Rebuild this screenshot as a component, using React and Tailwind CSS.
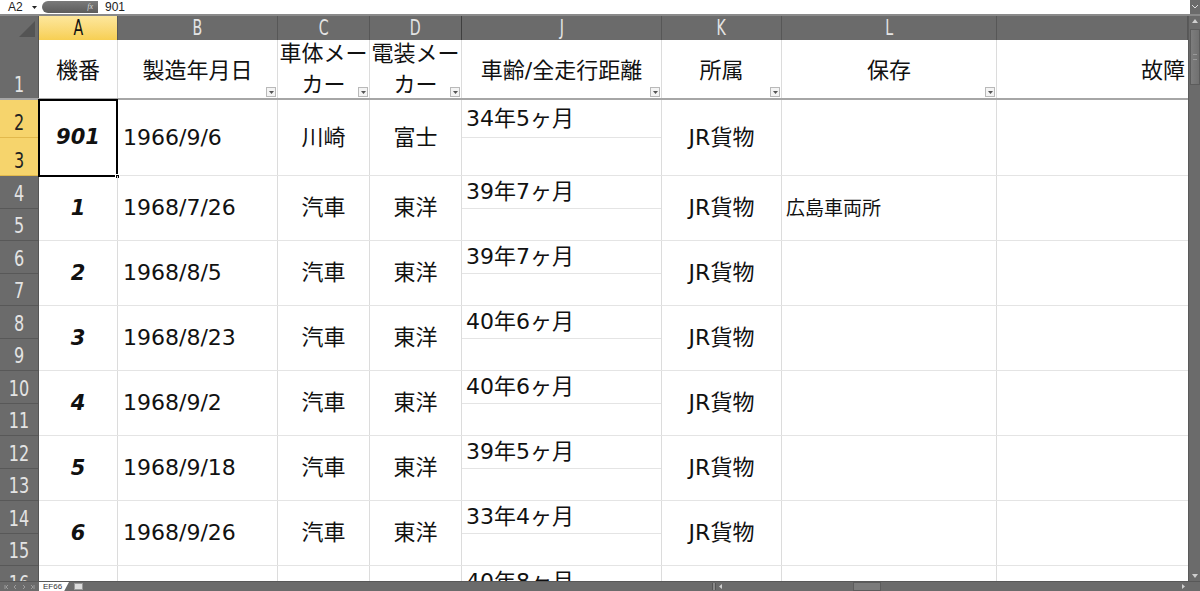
import React from 'react';

const CJK = "font-['DejaVu_Sans','Noto_Sans_CJK_JP',sans-serif]";
const UI = "font-['DejaVu_Sans_Condensed','DejaVu_Sans',sans-serif] [font-stretch:condensed]";

const records = [
  { no: '901', date: '1966/9/6', body: '川崎', elec: '富士', age: '34年5ヶ月', owner: 'JR貨物', keep: '', rows: [2, 3], tall: true },
  { no: '1', date: '1968/7/26', body: '汽車', elec: '東洋', age: '39年7ヶ月', owner: 'JR貨物', keep: '広島車両所', rows: [4, 5] },
  { no: '2', date: '1968/8/5', body: '汽車', elec: '東洋', age: '39年7ヶ月', owner: 'JR貨物', keep: '', rows: [6, 7] },
  { no: '3', date: '1968/8/23', body: '汽車', elec: '東洋', age: '40年6ヶ月', owner: 'JR貨物', keep: '', rows: [8, 9] },
  { no: '4', date: '1968/9/2', body: '汽車', elec: '東洋', age: '40年6ヶ月', owner: 'JR貨物', keep: '', rows: [10, 11] },
  { no: '5', date: '1968/9/18', body: '汽車', elec: '東洋', age: '39年5ヶ月', owner: 'JR貨物', keep: '', rows: [12, 13] },
  { no: '6', date: '1968/9/26', body: '汽車', elec: '東洋', age: '33年4ヶ月', owner: 'JR貨物', keep: '', rows: [14, 15] },
  { no: '', date: '', body: '', elec: '', age: '40年8ヶ月', owner: '', keep: '', rows: [16, 17] },
];

function FilterButton() {
  return (
    <div className="absolute right-[1px] bottom-[1px] w-[10px] h-[10px] bg-[#f4f4f4] border border-[#b9b9b9] flex items-center justify-center">
      <svg width="5" height="3" viewBox="0 0 5 3"><path d="M0 0h5L2.5 3z" fill="#555" /></svg>
    </div>
  );
}

function FormulaBar() {
  return (
    <div className="h-[16px] shrink-0 flex items-stretch bg-white border-b-2 border-[#8a8a8a] text-[12px] leading-none text-[#222]">
      <div className="w-[42px] flex items-center pl-[8px] font-['Liberation_Sans',sans-serif]">
        <span>A2</span>
        <svg className="ml-auto mr-[5px]" width="5" height="3" viewBox="0 0 5 3"><path d="M0 0h5L2.5 3z" fill="#222" /></svg>
      </div>
      <div className="w-[56px] my-[1px] rounded-l-full bg-linear-to-b from-[#7a7a7a] to-[#5c5c5c] flex items-center justify-end pr-[5px]">
        <span className="italic text-[8px] text-[#d8d8d8] font-['Liberation_Serif',serif]">fx</span>
      </div>
      <div className="flex-1 flex items-center pl-[7px] font-['Liberation_Sans',sans-serif]">901</div>
      <div className="w-[10px] bg-[#6b6b6b] flex items-center justify-center">
        <svg width="6" height="4" viewBox="0 0 6 4"><path d="M0 0l3 3 3-3" stroke="#ddd" fill="none" /></svg>
      </div>
    </div>
  );
}

function ColumnHeaders() {
  const letters = [
    { l: 'A', w: 'w-[79px]', sel: true },
    { l: 'B', w: 'w-[160px]' },
    { l: 'C', w: 'w-[92px]' },
    { l: 'D', w: 'w-[92px]', dark: true },
    { l: 'J', w: 'w-[200px]' },
    { l: 'K', w: 'w-[120px]' },
    { l: 'L', w: 'w-[215px]' },
    { l: '', w: 'flex-1' },
  ];
  return (
    <div className={`h-[24px] shrink-0 flex bg-[#6b6b6b] ${UI} text-[21px] leading-none`}>
      <div className="w-[39px] shrink-0 border-r border-[#555] relative">
        <svg className="absolute right-[3px] bottom-[3px]" width="16" height="16" viewBox="0 0 16 16"><path d="M16 0v16H0z" fill="#545454" /></svg>
      </div>
      {letters.map((c) => (
        <div
          key={c.l || 'm'}
          className={`${c.w} shrink-0 flex items-center justify-center border-r ${c.dark ? 'border-[#3f3f3f]' : 'border-[#575757]'} ${c.sel ? 'bg-linear-to-b from-[#fde79c] to-[#f7cf52] text-[#111]' : 'text-[#e4e4e4]'}`}
        >
          <span className="inline-block scale-x-75">{c.l}</span>
        </div>
      ))}
    </div>
  );
}

function HeaderRow() {
  const cell = 'relative shrink-0 flex items-center border-r border-[#dcdcdc]';
  return (
    <div className={`h-[60px] shrink-0 flex border-b-2 border-[#a6a6a6] ${CJK} text-[22px] leading-[31px] text-[#111]`}>
      <div className={`w-[39px] shrink-0 bg-[#6b6b6b] border-r border-[#555] flex items-end justify-center pb-[2px] ${UI} text-[21px] leading-none text-[#e4e4e4]`}>
        <span className="inline-block scale-x-85">1</span>
      </div>
      <div className={`${cell} w-[79px] justify-center pt-[3px]`}>機番</div>
      <div className={`${cell} w-[160px] justify-center pt-[3px]`}>製造年月日<FilterButton /></div>
      <div className={`${cell} w-[92px] justify-center text-center`}>車体メー<br />カー<FilterButton /></div>
      <div className={`${cell} w-[92px] justify-center text-center border-[#4a4a4a]`}>電装メー<br />カー<FilterButton /></div>
      <div className={`${cell} w-[200px] justify-center pt-[3px]`}>車齢/全走行距離<FilterButton /></div>
      <div className={`${cell} w-[120px] justify-center pt-[3px]`}>所属<FilterButton /></div>
      <div className={`${cell} w-[215px] justify-center pt-[3px]`}>保存<FilterButton /></div>
      <div className={`${cell} flex-1 justify-end pr-[3px] pt-[3px] border-r-0`}>故障</div>
    </div>
  );
}

function Record({ r }) {
  const cell = 'shrink-0 flex items-center border-r border-[#dcdcdc]';
  const sel = r.tall;
  return (
    <div className={`${r.tall ? 'h-[76px]' : 'h-[65px]'} shrink-0 flex border-b border-[#e4e4e4] ${CJK} text-[22px] leading-none text-[#111]`}>
      <div className={`w-[39px] shrink-0 flex flex-col border-r border-[#555] ${UI} text-[21px] leading-none -mb-px`}>
        {r.rows.map((n) => (
          <div
            key={n}
            className={`flex-1 flex items-end justify-center pb-[3px] border-b ${sel ? 'bg-[#f6d46c] text-[#222] border-[#e2b94c]' : 'bg-[#6b6b6b] text-[#e4e4e4] border-[#585858]'}`}
          >
            <span className="inline-block scale-x-85">{n}</span>
          </div>
        ))}
      </div>
      <div className={`${cell} w-[79px] justify-center relative font-['DejaVu_Sans',sans-serif] font-bold italic text-[21px]`}>
        {r.no}
        {sel && (
          <div className="absolute -left-px -top-px right-[-1px] bottom-[-2px] border-2 border-black">
            <div className="absolute right-[-4px] bottom-[-4px] w-[5px] h-[5px] bg-black border border-white" />
          </div>
        )}
      </div>
      <div className={`${cell} w-[160px] pl-[5px]`}>{r.date}</div>
      <div className={`${cell} w-[92px] justify-center`}>{r.body}</div>
      <div className={`${cell} w-[92px] justify-center border-[#4a4a4a]`}>{r.elec}</div>
      <div className="w-[200px] shrink-0 flex flex-col border-r border-[#dcdcdc]">
        <div className="flex-1 flex items-center pl-[4px] border-b border-[#e4e4e4]">{r.age}</div>
        <div className="flex-1" />
      </div>
      <div className={`${cell} w-[120px] justify-center`}>{r.owner}</div>
      <div className={`${cell} w-[215px] pl-[4px] text-[19px]`}>{r.keep}</div>
      <div className={`${cell} flex-1 border-r-0`} />
    </div>
  );
}

function VScroll() {
  return (
    <div className="w-[12px] shrink-0 bg-[#6b6b6b] flex flex-col items-center py-[3px] border-l border-[#5a5a5a]">
      <svg width="6" height="4" viewBox="0 0 6 4"><path d="M0 4h6L3 0z" fill="#cfcfcf" /></svg>
      <div className="mt-[6px] w-[10px] h-[56px] bg-linear-to-r from-[#7d7d7d] to-[#707070] border border-[#5c5c5c] flex items-center justify-center">
        <div className="w-[4px] h-[6px] border-y border-[#999]" />
      </div>
      <div className="flex-1" />
      <svg width="6" height="4" viewBox="0 0 6 4"><path d="M0 0h6L3 4z" fill="#cfcfcf" /></svg>
    </div>
  );
}

function BottomBar() {
  return (
    <div className="h-[10px] shrink-0 bg-[#6b6b6b] flex items-stretch border-t border-[#585858]">
      <div className="w-[39px] flex items-center justify-around px-[2px]">
        {['M1 0v4M4 0L2 2l2 2', 'M3 0L1 2l2 2', 'M1 0l2 2-2 2', 'M0 0l2 2-2 2M3 0v4'].map((d) => (
          <svg key={d} width="4" height="4" viewBox="0 0 4 4"><path d={d} stroke="#a9a9a9" fill="none" strokeWidth="0.8" /></svg>
        ))}
      </div>
      <div className="w-[30px] bg-white [clip-path:polygon(0_0,100%_0,84%_100%,0_100%)] flex items-center pl-[4px] text-[8px] leading-none text-[#333] font-['Liberation_Sans',sans-serif]">EF66</div>
      <div className="w-[16px] ml-[1px] flex items-center justify-center">
        <div className="w-[9px] h-[7px] bg-[#dcdcdc] border border-[#999]" />
      </div>
      <div className="flex-1" />
      <div className="w-[4px] my-[1px] bg-[#8a8a8a] border-x border-[#555]" />
      <div className="w-[472px] flex items-center px-[3px]">
        <svg width="3" height="5" viewBox="0 0 3 5"><path d="M3 0v5L0 2.5z" fill="#cfcfcf" /></svg>
        <div className="ml-[131px] w-[28px] h-[9px] bg-[#7b7b7b] border border-[#5c5c5c]" />
        <div className="flex-1" />
        <svg width="3" height="5" viewBox="0 0 3 5"><path d="M0 0v5l3-2.5z" fill="#cfcfcf" /></svg>
      </div>
      <div className="w-[12px]" />
    </div>
  );
}

export default function App() {
  return (
    <div className="w-[1200px] h-[591px] overflow-hidden bg-white flex flex-col">
      <FormulaBar />
      <div className="flex-1 flex min-h-0">
        <div className="flex-1 flex flex-col overflow-hidden">
          <ColumnHeaders />
          <HeaderRow />
          {records.map((r) => (
            <Record key={r.rows[0]} r={r} />
          ))}
        </div>
        <VScroll />
      </div>
      <BottomBar />
    </div>
  );
}
